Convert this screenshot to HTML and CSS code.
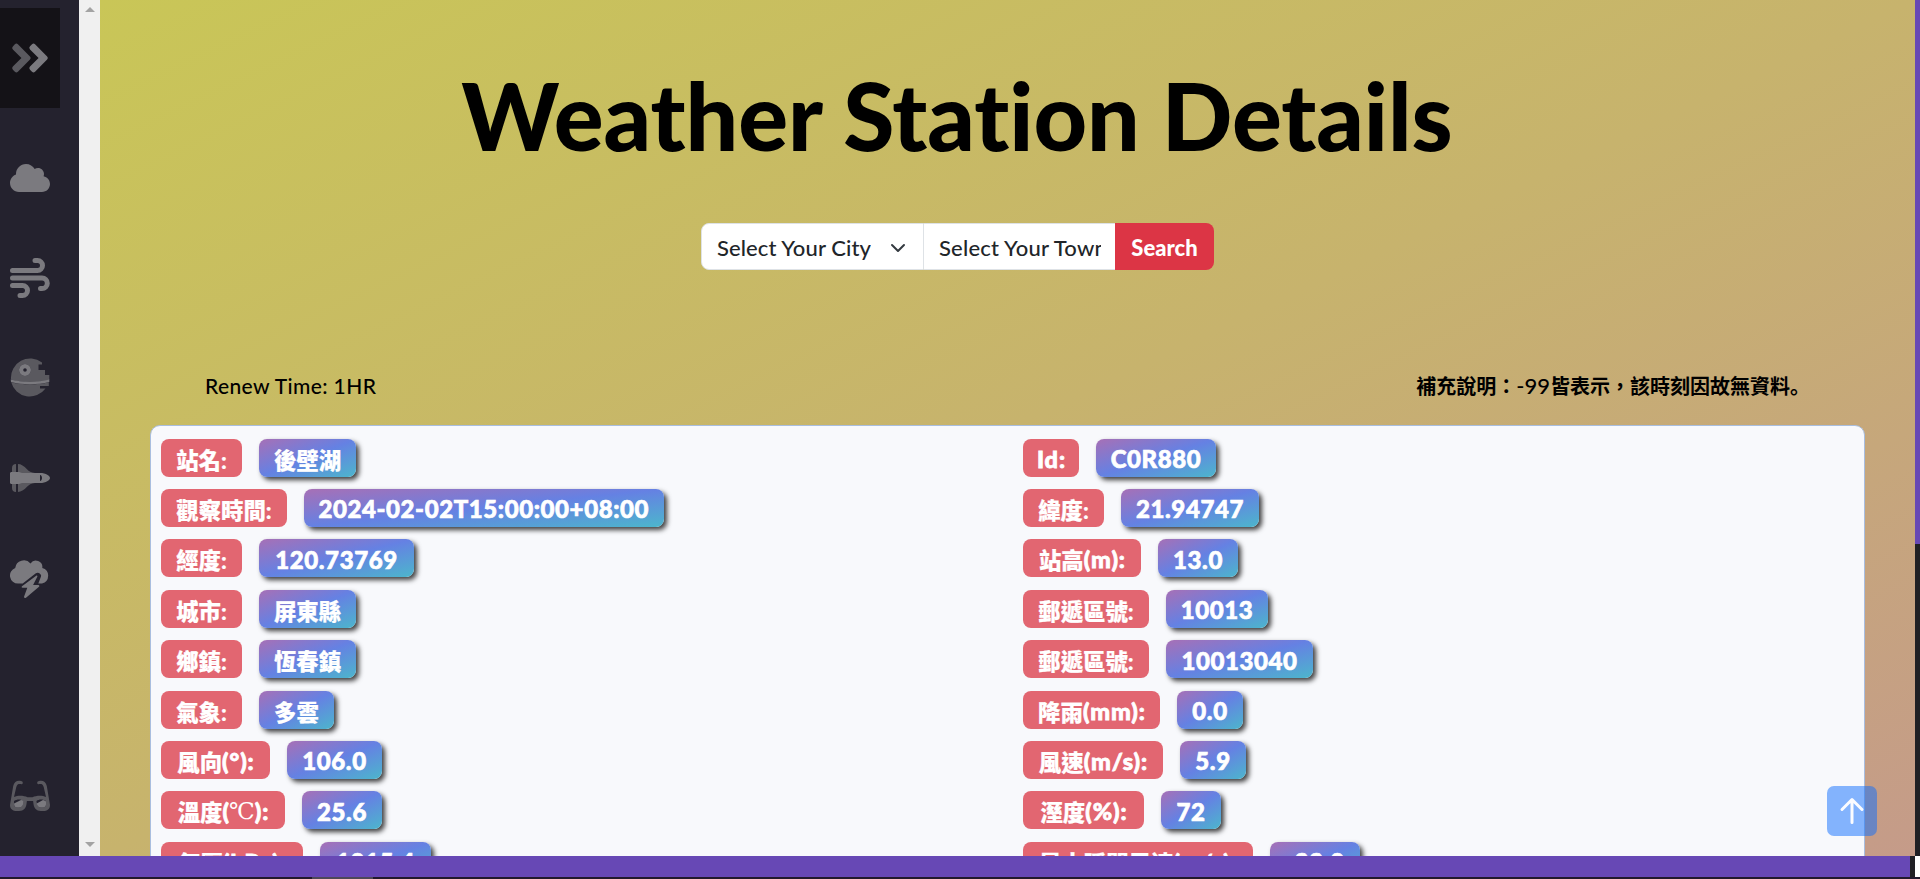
FILE: index.html
```html
<!DOCTYPE html>
<html lang="zh-Hant">
<head>
<meta charset="utf-8">
<title>Weather Station Details</title>
<link rel="stylesheet" href="styles.css">
</head>
<body>
<div class="viewport">
  <nav class="sidebar">
    <a class="nav-item toggle">
      <svg width="40" height="46" viewBox="0 0 448 512"><path class="dim" d="M224 273L88.4 409a23.8 23.8 0 0 1-33.8 0L32 386.4a23.9 23.9 0 0 1 0-33.9l96.1-96.4L32 159.7a23.9 23.9 0 0 1 0-33.9l22.4-22.8a23.8 23.8 0 0 1 33.8 0L223.9 239a23.9 23.9 0 0 1 .1 34z"/><path d="M415.9 273L280.3 409a23.8 23.8 0 0 1-33.8 0L224 386.3a23.9 23.9 0 0 1 0-33.9L320.1 256l-96-96.5a23.9 23.9 0 0 1 0-33.9l22.5-22.6a23.8 23.8 0 0 1 33.8 0L416 239a24 24 0 0 1-.1 34z"/></svg>
    </a>
    <a class="nav-item"><svg width="40" height="32" viewBox="0 0 640 512"><path d="M537.6 226.6c4.1-10.7 6.4-22.4 6.4-34.6 0-53-43-96-96-96-19.7 0-38.1 6-53.3 16.2C367 64.2 315.3 32 256 32c-88.4 0-160 71.6-160 160 0 2.7.1 5.4.2 8.1C40.2 219.8 0 273.2 0 336c0 79.5 64.5 144 144 144h368c70.7 0 128-57.3 128-128 0-61.9-44-113.6-102.4-125.4z"/></svg></a>
    <a class="nav-item"><svg class="line" width="40" height="40" viewBox="0 0 40 40"><path d="M2.5 12.5H27.500a5 5 0 0 0 0-10h-2.500M2.500 20H32a5.300 5.300 0 0 1 0 10.600h-1.500M2.500 27.500H12.500a5 5 0 0 1 0 10h-2.500"/></svg></a>
    <a class="nav-item"><svg width="40" height="40" viewBox="0 0 40 40"><path class="dim" fill-rule="evenodd" d="M1 21.500A19.300 19.300 0 0 1 32 4.500V6.500H28.500V12H35V17H39.300V22C29 25 11 25 1 21.500zM15 6a6 6 0 1 0 0 12 6 6 0 0 0 0-12z"/><path class="dim" d="M1.200 24.200C12 27 28 27 38.800 24.200V28H30V30.500H35.500A19.300 19.300 0 0 1 1.200 24.200z"/><path fill-rule="evenodd" d="M15 6a6 6 0 1 0 0 12 6 6 0 0 0 0-12zm0 4.200a1.800 1.800 0 1 1 0 3.600 1.800 1.800 0 0 1 0-3.600zM.7 21.500C12 24.800 28 24.800 39.300 21.500V24C28 27 12 27 1 24z"/></svg></a>
    <a class="nav-item"><svg width="40" height="28" viewBox="0 0 40 28"><path class="dim" d="M6 0v8H2V4C2 1.500 3.500 0 6 0zM8 0c3 0 6 2 9 5.200C19 7.300 21 8.500 25 9H8zM2 20h4v8c-2.500 0-4-1.500-4-4zM8 19h17c-4 .5-6 1.700-8 3.800C14 26 11 28 8 28z"/><path fill-rule="evenodd" d="M1.500 8H9c1 0 2 1 3 1h18c6 0 10 2.800 10 5s-4 5-10 5H12c-1 0-2 1-3 1H1.500C.6 20 0 19.400 0 18.500v-9C0 8.600.6 8 1.500 8zM30 11v6c2.700 0 2.700-6 0-6z"/></svg></a>
    <a class="nav-item"><svg width="40" height="40" viewBox="0 0 40 40"><path d="M8 25.500A8 8 0 0 1 5.200 10 8.700 8.700 0 0 1 20.500 5.500 6.500 6.500 0 0 1 32.300 10 8 8 0 0 1 32 25.500H28.300L31 18.500C31.800 16 28 13.500 25.500 15.500L12.700 25.500z"/><path d="M26.500 17.500L12 28.200c-.8.700-.3 1.600.5 1.600h4.800l-3.200 8.700c-.4 1.400 1.300 2 2.200 1.100L29 28.700c.7-.8.200-1.700-.6-1.700h-5.300l4.200-8.300c.4-.8-.1-1.500-.8-1.200z"/></svg></a>
    <a class="nav-item last"><svg width="40" height="32" viewBox="0 0 40 32"><path class="dim" fill-rule="evenodd" d="M0 25L3.200 6C4 2 7 .3 10 .8l1.800.5c1.300.4 1.400 2.700 0 2.900C9 4 7.500 3.500 6.300 7L4 17c4-2 10-1.500 13.500.2h5C26 15.500 32 15 36 17L33.700 7C32.500 3.500 31 4 28.200 4.200c-1.400-.2-1.300-2.500 0-2.900L30 .8c3-.5 6 1.200 6.800 5.200L40 25c0 4-3 6-6.700 6h-2.500c-4.500 0-6.800-3-7.300-7l-.4-3h-6.200l-.4 3c-.5 4-2.800 7-7.300 7H6.700C3 31 0 29 0 25zM4 21v3.500C4 26.500 5.500 27.500 7 27.500h2c2 0 3.500-1 4-3.500l.6-3C11 19 7 19 4 21zM26.400 21l.6 3c.5 2.500 2 3.500 4 3.500h2c1.500 0 3-1 3-3V21c-3-2-7-2-9.600 0z"/><path d="M4 23.500L11 20q3 .2 2.600 1.500l-.6 3c-.5 2-2 3-4 3H7c-2 0-3-1.500-3-4zM26.700 23.500L33 20q3 .5 3 1.500v3c0 2-1.500 3-3 3h-2c-2 0-3.500-1-4-3z"/></svg></a>
  </nav>
  <div class="scrollbar"><i class="up"></i><i class="down"></i></div>
  <main>
    <h1>Weather Station Details</h1>
    <form class="search">
      <div class="select city"><span>Select Your City</span><svg width="16" height="16" viewBox="0 0 16 16"><path d="M2 5l6 6 6-6"/></svg></div>
      <div class="select town"><span>Select Your Town</span></div>
      <button type="button">Search</button>
    </form>
    <div class="notes"><span class="renew">Renew Time: 1HR</span><span class="remark">補充說明：<b>-99</b>皆表示，該時刻因故無資料<span class="stop" lang="ja">。</span></span></div>
    <section class="card">
      <div class="col">
        <div class="row"><span class="key w81">站名:</span><span class="val w97 zh">後壁湖</span></div>
        <div class="row"><span class="key w126">觀察時間:</span><span class="val w360">2024-02-02T15:00:00+08:00</span></div>
        <div class="row"><span class="key w81">經度:</span><span class="val w155">120.73769</span></div>
        <div class="row"><span class="key w81">城市:</span><span class="val w97 zh">屏東縣</span></div>
        <div class="row"><span class="key w81">鄉鎮:</span><span class="val w97 zh">恆春鎮</span></div>
        <div class="row"><span class="key w81">氣象:</span><span class="val w75 zh">多雲</span></div>
        <div class="row"><span class="key w109">風向<b>(°):</b></span><span class="val w95">106.0</span></div>
        <div class="row"><span class="key w124">溫度<b>(</b><em>℃</em><b>):</b></span><span class="val w80">25.6</span></div>
        <div class="row"><span class="key w142">氣壓<b>(hPa):</b></span><span class="val w111">1015.4</span></div>
      </div>
      <div class="col">
        <div class="row"><span class="key w56"><b>Id:</b></span><span class="val w120">C0R880</span></div>
        <div class="row"><span class="key w81">緯度:</span><span class="val w138">21.94747</span></div>
        <div class="row"><span class="key w118">站高<b>(m):</b></span><span class="val w80">13.0</span></div>
        <div class="row"><span class="key w126">郵遞區號:</span><span class="val w102">10013</span></div>
        <div class="row"><span class="key w126">郵遞區號:</span><span class="val w147">10013040</span></div>
        <div class="row"><span class="key w137">降雨<b>(mm):</b></span><span class="val w66">0.0</span></div>
        <div class="row"><span class="key w140">風速<b>(m/s):</b></span><span class="val w66">5.9</span></div>
        <div class="row"><span class="key w121">溼度<b>(%):</b></span><span class="val w60">72</span></div>
        <div class="row"><span class="key w230">最大瞬間風速<b>(m/s):</b></span><span class="val w90">-99.0</span></div>
      </div>
    </section>
    <a class="to-top"><svg width="26" height="28" viewBox="0 0 26 28"><path d="M13 25.500V3M3 12.500L13 2.500l10 10"/></svg></a>
  </main>
  <div class="page-scroll"></div>
</div>
<div class="footer-bar"><div class="purple"></div><div class="dark"></div><div class="corner"></div></div>
<div class="bottom-scroll"><i></i></div>
</body>
</html>
```

FILE: styles.css
```css
* { box-sizing: border-box; }
body {
  margin: 0;
  height: 879px;
  overflow: hidden;
  display: flex;
  flex-direction: column;
  background: #24222e;
  font-family: Lato, "Noto Sans CJK TC", sans-serif;
}
.viewport { display: flex; height: 856px; overflow: hidden; }
.sidebar { width: 79px; padding-top: 8px; display: flex; flex-direction: column; background: #24222e; }
.nav-item { width: 60px; height: 100px; flex: none; display: flex; align-items: center; justify-content: center; }
.toggle { background: #141217; margin-bottom: 20px; }
.last { margin-top: 118px; }
.sidebar svg { fill: #7b7a7f; }
.sidebar .dim { fill: #5a595f; }
.sidebar .line path { fill: none; stroke: #7b7a7f; stroke-width: 5; stroke-linecap: round; }
.scrollbar { width: 21px; background: #f0f0f0; padding: 7px 0 9px; display: flex; flex-direction: column; justify-content: space-between; align-items: center; }
.scrollbar i { border: 5px solid transparent; }
.scrollbar .up { border-top: 0; border-bottom-color: #a3a3a3; }
.scrollbar .down { border-bottom: 0; border-top-color: #a3a3a3; }
main { position: relative; width: 1815px; overflow: hidden; background: linear-gradient(to bottom right, #c9c657, #c7b36d 50%, #c59b89); }
h1 { margin: 58px 0 0; height: 115px; line-height: 115px; padding-right: 101px; text-align: center; font-size: 93px; font-weight: 900; letter-spacing: -.05px; font-variant-ligatures: none; white-space: nowrap; }
.search { display: flex; width: 513px; height: 47px; margin: 50px 0 0 601px; }
.select { border: 1px solid #dee2e6; background: #fff; display: flex; align-items: center; color: #212529; font-size: 22px; font-weight: 500; white-space: nowrap; overflow: hidden; padding: 2px 15px 0; flex: none; }
.city { width: 223px; border-radius: 8px 0 0 8px; justify-content: space-between; padding-right: 17px; letter-spacing: .1px; }
.city path { fill: none; stroke: #343a40; stroke-width: 2; stroke-linecap: round; stroke-linejoin: round; }
.town { width: 191px; border-left: 0; border-right: 0; padding-right: 14px; }
.select span { overflow: hidden; }
.town span { letter-spacing: .2px; }
.search button { width: 99px; border: 0; border-radius: 0 8px 8px 0; background: #dc3545; color: #fff; font: 900 22px Lato, sans-serif; padding: 2px 0 0; }
.notes { display: flex; justify-content: space-between; align-items: center; height: 40px; margin: 95px 105px 0 105px; font-size: 21px; white-space: nowrap; color: #000; }
.renew { font-weight: 500; letter-spacing: .4px; }
.remark { font-size: 20px; font-weight: 700; }
.remark b { font-size: 22px; font-weight: 500; }
.stop { font-family: "Noto Sans CJK JP", sans-serif; }
.card { width: 1715px; height: 600px; margin: 20px 0 0 50px; border: 1px solid #a9bedf; border-radius: 10px; background: #f8f9fc; padding: 12.6px 10px; display: flex; }
.col { width: 862px; display: flex; flex-direction: column; gap: 12.4px; flex: none; }
.row { display: flex; gap: 17px; height: 38px; flex: none; }
.key, .val { height: 38px; border-radius: 8px; padding-top: 2px; display: flex; align-items: center; justify-content: center; color: #fff; font-weight: 900; white-space: nowrap; flex: none; -webkit-text-stroke: .7px #fff; }
.key { background: #e26671; font-size: 22.4px; -webkit-text-stroke: .2px #fff; }
.key b { font-size: 23.500px; font-weight: 900; letter-spacing: .9px; margin-right: -.9px; -webkit-text-stroke: .8px #fff; }
.key em { font: 400 23px "Liberation Serif", "DejaVu Serif", serif; -webkit-text-stroke: 0; }
.val { background: linear-gradient(to bottom right, #a770b6, #6581e3 50%, #4cb6cc); font-size: 24px; letter-spacing: .6px; box-shadow: 3px 3px 5px rgba(0, 0, 0, .75); }
.zh { font-size: 22.4px; letter-spacing: 0; -webkit-text-stroke: .2px #fff; }
.w56 { width: 56px; } .w60 { width: 60px; } .w66 { width: 66px; } .w75 { width: 75px; }
.w80 { width: 80px; } .w81 { width: 81px; } .w90 { width: 90px; } .w95 { width: 95px; }
.w97 { width: 97px; } .w102 { width: 102px; } .w109 { width: 109px; } .w111 { width: 111px; }
.w118 { width: 118px; } .w120 { width: 120px; } .w121 { width: 121px; } .w124 { width: 124px; }
.w126 { width: 126px; } .w137 { width: 137px; } .w138 { width: 138px; } .w140 { width: 140px; }
.w142 { width: 142px; } .w147 { width: 147px; } .w155 { width: 155px; } .w230 { width: 230px; }
.w360 { width: 359.500px; }
.to-top { position: absolute; right: 38px; bottom: 20px; width: 50px; height: 50px; border-radius: 7px; background: rgba(13, 110, 253, .5); display: flex; align-items: center; justify-content: center; }
.to-top path { fill: none; stroke: #fbfcff; stroke-width: 3; stroke-linecap: round; stroke-linejoin: round; }
.page-scroll { width: 5px; background: linear-gradient(#6748b5 544px, #202024 544px); }
.footer-bar { display: flex; height: 21px; }
.purple { width: 1910px; background: #6748b5; }
.dark { width: 5px; background: #202024; }
.corner { width: 5px; background: #fff; }
.bottom-scroll { height: 2px; background: #21192d; padding-left: 312px; }
.bottom-scroll i { display: block; width: 61px; height: 2px; background: #4d4858; }
```
